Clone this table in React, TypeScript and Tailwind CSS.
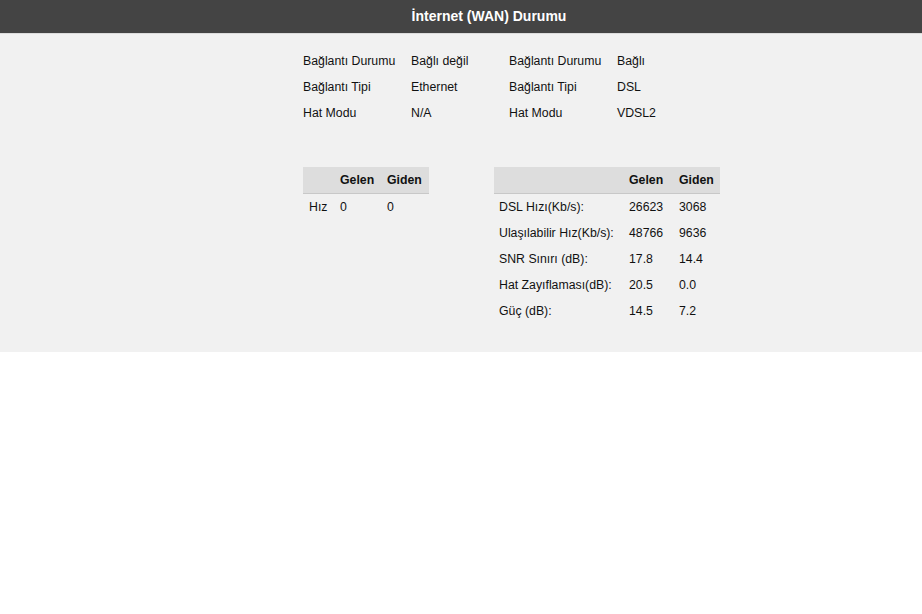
const info = [
  ['Bağlantı Durumu', 'Bağlı değil', 'Bağlantı Durumu', 'Bağlı'],
  ['Bağlantı Tipi', 'Ethernet', 'Bağlantı Tipi', 'DSL'],
  ['Hat Modu', 'N/A', 'Hat Modu', 'VDSL2'],
];

const dsl = [
  ['DSL Hızı(Kb/s):', '26623', '3068'],
  ['Ulaşılabilir Hız(Kb/s):', '48766', '9636'],
  ['SNR Sınırı (dB):', '17.8', '14.4'],
  ['Hat Zayıflaması(dB):', '20.5', '0.0'],
  ['Güç (dB):', '14.5', '7.2'],
];

export default function App() {
  return (
    <div className="min-h-screen bg-white text-[12.3px] text-[#111] font-['Liberation_Sans',Arial,sans-serif]">
      {/* Title bar */}
      <div className="h-[33px] bg-[#444444] flex items-center justify-center pl-[56px] border-b border-[#dcdcdc] box-content">
        <h1 className="text-white font-bold text-[14px]">İnternet (WAN) Durumu</h1>
      </div>

      <div className="bg-[#f1f1f1] pt-[14px] pb-[28px] pl-[303px]">
        {/* Connection info */}
        <div className="grid grid-cols-[108px_98px_108px_auto] w-max">
          {info.map((row, i) =>
            row.map((cell, j) => (
              <div key={`${i}-${j}`} className="h-[26px] flex items-center">
                {cell}
              </div>
            ))
          )}
        </div>

        <div className="flex items-start gap-[65px] mt-[41px]">
          {/* Ethernet speed */}
          <div className="w-[126px]">
            <div className="grid grid-cols-[31px_47px_48px] h-[27px] items-center bg-[#dddddd] border-b border-[#c8c8c8] font-bold">
              <div />
              <div className="pl-[6px]">Gelen</div>
              <div className="pl-[6px]">Giden</div>
            </div>
            <div className="grid grid-cols-[31px_47px_48px] h-[26px] items-center">
              <div className="pl-[6px]">Hız</div>
              <div className="pl-[6px]">0</div>
              <div className="pl-[6px]">0</div>
            </div>
          </div>

          {/* DSL stats */}
          <div className="w-[226px]">
            <div className="grid grid-cols-[129px_50px_47px] h-[27px] items-center bg-[#dddddd] border-b border-[#c8c8c8] font-bold">
              <div />
              <div className="pl-[6px]">Gelen</div>
              <div className="pl-[6px]">Giden</div>
            </div>
            {dsl.map(([label, down, up]) => (
              <div key={label} className="grid grid-cols-[129px_50px_47px] h-[26px] items-center">
                <div className="pl-[5px]">{label}</div>
                <div className="pl-[6px]">{down}</div>
                <div className="pl-[6px]">{up}</div>
              </div>
            ))}
          </div>
        </div>
      </div>
    </div>
  );
}
